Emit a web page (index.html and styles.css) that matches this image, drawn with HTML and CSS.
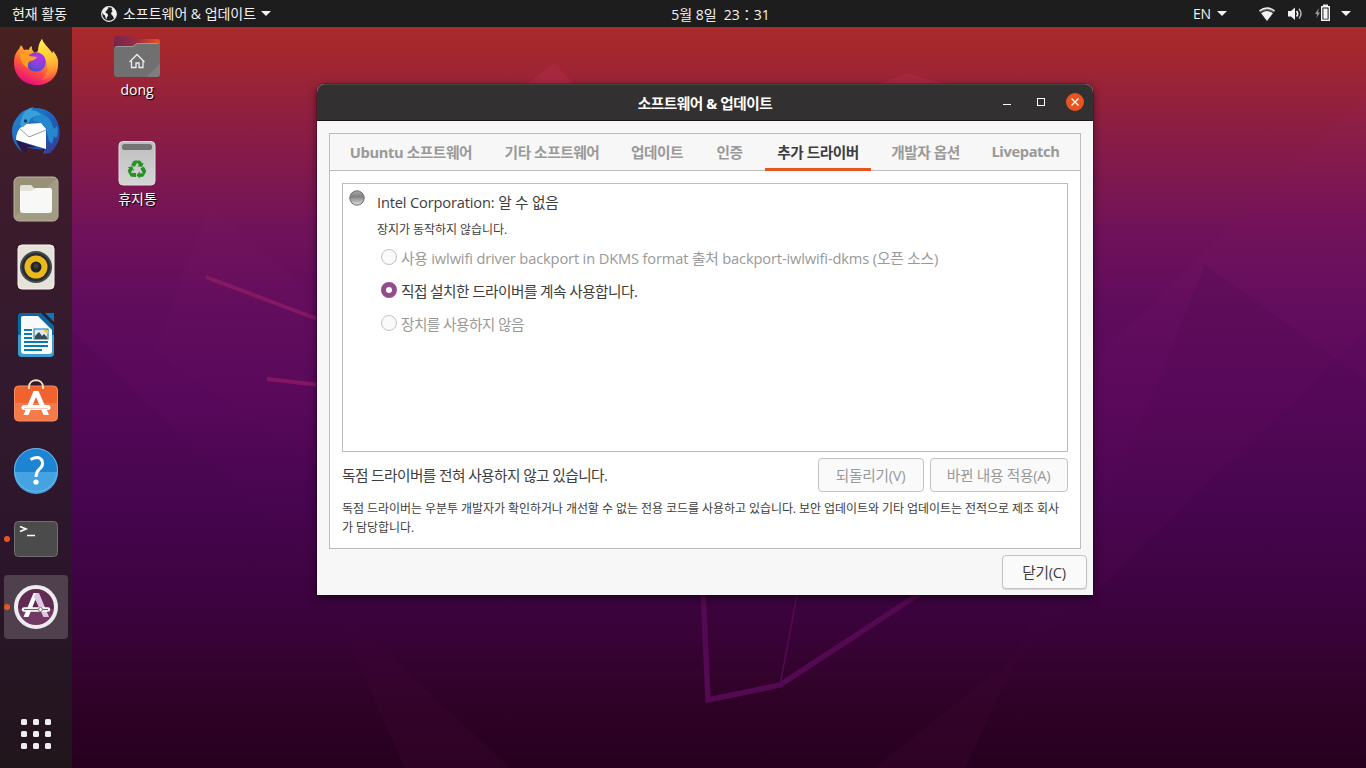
FILE: index.html
```html
<!DOCTYPE html>
<html lang="ko">
<head>
<meta charset="utf-8">
<title>소프트웨어 &amp; 업데이트</title>
<link rel="stylesheet" href="styles.css">
</head>
<body>
<svg class="wallpaper" viewBox="0 0 1366 768" aria-hidden="true">
  <defs>
    <linearGradient id="sky" x1="0" y1="0" x2="0" y2="1">
      <stop offset="0" stop-color="#b02b28"/><stop offset=".06" stop-color="#a6282d"/><stop offset=".13" stop-color="#94213c"/><stop offset=".22" stop-color="#81194d"/><stop offset=".3" stop-color="#70125a"/><stop offset=".4" stop-color="#600c5d"/><stop offset=".52" stop-color="#58085a"/><stop offset=".65" stop-color="#480550"/><stop offset=".78" stop-color="#3d0340"/><stop offset=".9" stop-color="#310229"/><stop offset="1" stop-color="#26001e"/>
    </linearGradient>
    <linearGradient id="shade" x1="0" y1="0" x2="0" y2="1"><stop offset="0" stop-color="#30003c" stop-opacity=".12"/><stop offset="1" stop-color="#30003c" stop-opacity="0"/></linearGradient>
    <linearGradient id="glow" x1="0" y1="0" x2="0" y2="1"><stop offset="0" stop-color="#83206a" stop-opacity="0"/><stop offset="1" stop-color="#83206a" stop-opacity=".08"/></linearGradient>
    <linearGradient id="fade" x1="0" y1="0" x2="0" y2="1"><stop offset="0" stop-color="#83206a" stop-opacity=".1"/><stop offset="1" stop-color="#83206a" stop-opacity="0"/></linearGradient>
  </defs>
  <rect width="1366" height="768" fill="url(#sky)"/>
  <path d="M72 330 310 560V600L72 600Z" fill="url(#shade)"/>
  <path d="M155 350 210 205 317 300V470Z" fill="url(#fade)"/>
  <path d="M330 600 405 768H510Z" fill="url(#glow)"/>
  <path d="M1366 95 1093 360V595L1366 330Z" fill="#9b2974" opacity=".06"/>
  <path d="M1205 265 1093 540V595H1366V380Z" fill="url(#shade)"/>
  <path d="M1093 595 875 768H965L1045 595Z" fill="url(#glow)"/>
  <path d="M526 85 554 63 575 85M878 85 907 73 950 85" fill="#a92a42" opacity=".75"/>
  <g fill="none" stroke="#9c2068" stroke-width="4" opacity=".6"><path d="M206 277 320 320M267 379 320 385"/></g>
  <g fill="none" stroke="#540a52"><path stroke-width="5.500" d="M703 590 708 700 780 685 925 590"/><path stroke-width="1.500" d="M780 685 798 590"/></g>
</svg>

<div class="screen">
<header class="topbar">
  <div class="topbar-left">
    <span class="activities">현재 활동</span>
    <svg class="globe" viewBox="0 0 16 16"><circle cx="8" cy="8" r="7.300" fill="#1d1d1d" stroke="#f2f2f2" stroke-width="1.200"/><path fill="#f2f2f2" d="M1.500 5 3.500 2.200 6.500 1 7.600 2.200 6.300 3 6.300 4.200 4.800 5 4.500 6.500 6.300 7.800 7.200 9.300 6 11.300 5.400 13.500 4.600 12 4 9.500 2.500 8.500 1.200 6.500ZM11 1.800 13 3 15 6 15.200 9 13.700 12 12.700 12 12 10 10.500 8.700 10.100 6.800 11.600 5.200 10.600 3.700Z"/></svg>
    <span class="app-name">소프트웨어 &amp; 업데이트</span><i class="caret"></i>
  </div>
  <div class="clock">5월 8일&nbsp; 23：31</div>
  <div class="topbar-right">
    <span class="lang">EN</span><i class="caret"></i>
    <svg class="wifi" viewBox="0 0 16 16"><path fill="#777" d="M0 5Q8-1 16 5L14.800 6.600Q8 2 1.200 6.600Z"/><path d="M.5 4.800Q8-.8 15.500 4.800" fill="none" stroke="#f2f2f2" stroke-width="1.400"/><path fill="#f2f2f2" d="M2.100 7.200Q8 2.800 13.900 7.200L8 15Z"/></svg>
    <svg class="volume" viewBox="0 0 16 16"><path fill="#f2f2f2" d="M1 5H4L8 1.500V14L4 10.500H1Z"/><path d="M9.600 5Q11.800 7.800 9.600 10.500" fill="none" stroke="#f2f2f2" stroke-width="1.600"/><path d="M12 2.800Q16 7.800 12 12.600" fill="none" stroke="#bbb" stroke-width="1.400"/></svg>
    <svg class="battery" viewBox="0 0 16 18"><path fill="#999" d="M4 4 0 10H2.200L1.500 14 5 8.500H3Z"/><path fill="none" stroke="#f2f2f2" stroke-width="1.400" d="M6.700 2.700H14.300V16.300H6.700Z"/><path fill="#f2f2f2" d="M8 .5H13V2.500H8ZM8.400 4.500H12.600V14.700H8.400Z"/></svg>
    <i class="caret"></i>
  </div>
</header>

<div class="workspace">
<nav class="dock">
  <div class="launcher"><svg viewBox="0 1 48 48">
    <defs><linearGradient id="fx" x1=".8" y1="0" x2=".35" y2="1"><stop offset="0" stop-color="#fff44f"/><stop offset=".38" stop-color="#ffa92d"/><stop offset=".65" stop-color="#ff5a3c"/><stop offset="1" stop-color="#e5097f"/></linearGradient><linearGradient id="fxr" x1=".3" y1="0" x2=".5" y2="1"><stop offset="0" stop-color="#fff04a"/><stop offset=".5" stop-color="#ffc736"/><stop offset="1" stop-color="#ff8a35" stop-opacity=".3"/></linearGradient><radialGradient id="fxg" cx=".65" cy=".25" r=".8"><stop offset="0" stop-color="#b833e8"/><stop offset=".55" stop-color="#8243dc"/><stop offset="1" stop-color="#4a4fc0"/></radialGradient></defs>
    <path fill="url(#fx)" d="M8 9C9 6 10 8 12 12Q15 11 17 12Q17 9 20 8Q19 12 23 15L27 12C26 7 29 3 30 1C31 6 38 10 40 16L41 13C44 17 47 21 46 27C46 39 37 47 25 47C12 47 2 38 2 25C2 18 4 14 7 11Z"/>
    <path fill="url(#fxr)" d="M30 1C31 7 39 11 42 18L41 13Q48 21 45 31Q40 41 30 42 38 34 34 22L26 14Q26 6 30 1Z"/>
    <circle cx="24" cy="24" r="9.800" fill="url(#fxg)"/><path fill="#ff9d22" d="M8 16Q13 14 18 18L25 19Q24 22 18 23 15 25 16 30 8 26 8 16Z"/>
  </svg></div>
  <div class="launcher"><svg viewBox="0 0 48 48">
    <defs><linearGradient id="tb" x1="0" y1="0" x2="1" y2="1"><stop offset="0" stop-color="#258bd0"/><stop offset=".5" stop-color="#1b65bd"/><stop offset="1" stop-color="#3c3591"/></linearGradient></defs>
    <path fill="url(#tb)" d="M4 12Q10 1 24 1Q43 2 47 20Q50 36 38 46L31 47 33 42Q16 44 4 34L10 45Q0 37 0 25Q0 17 4 12Z"/>
    <path fill="#2587cc" d="M21 5Q37 5 42 22L45 19Q47 27 44 31L42 29 40 37 37 34 35 26Q33 15 21 14Z"/>
    <path fill="#fff" d="M8 21 14 17 29 16 34 22 34 42 4 33Q4 26 8 21Z"/><path d="M7 21 17 30 34 23" fill="none" stroke="#999"/>
    <path fill="#39a0dc" d="M9 13Q12 1 22 0L19 3Q27 4 29 8 19 8 17 15L11 20 8 18Z"/><circle cx="13.500" cy="14" r="1.700" fill="#163b59"/><path fill="#29164e" d="M4 33 25 40.500 15 40 14 45 10 43Z"/>
  </svg></div>
  <div class="launcher"><svg viewBox="0 0 48 48"><rect x="2" y="2" width="44" height="44" rx="5" fill="#989178" stroke="#bbb5a3"/><path fill="#a29c85" d="M45 3 3 41Q3 45 7 45H40Q45 45 45 40V7Z"/><path fill="#e3e1d9" d="M8 12Q8 10 10 10H19L23 14V24H8Z"/><path fill="#f8f8f7" d="M8 16H20L23 13H38Q40 13 40 16V35Q40 38 37 38H11Q8 38 8 35Z"/></svg></div>
  <div class="launcher"><svg viewBox="0 0 48 48"><rect x="6" y="2" width="36" height="44" rx="4" fill="#e5e2d9" stroke="#f7f5ee"/><circle cx="24" cy="24" r="16" fill="#444a51"/><circle cx="24" cy="24" r="14" fill="#282c31"/><circle cx="24" cy="24" r="11.500" fill="#ebb91b"/><circle cx="24" cy="24" r="5.500" fill="#202427"/><circle cx="24" cy="23" r="2.500" fill="#3d4043"/></svg></div>
  <div class="launcher"><svg viewBox="0 0 48 48"><path fill="#0669a4" d="M9 2H29L42 15V42Q42 46 38 46H10Q6 46 6 42V5Q6 2 9 2Z"/><path fill="#3b9cd0" d="M6 24H42V42Q42 46 38 46H10Q6 46 6 42Z"/><path fill="#fafafa" d="M11 5H26L40 19V40Q40 43 37 43H12Q9 43 9 40V7Q9 5 11 5Z"/><path fill="#087bb5" d="M33 2H42V11Z"/><path d="M12 19H20M12 23H20M12 27H20M12 31H36M12 35H36M12 39H30" stroke="#087bb5" stroke-width="2"/><rect x="22" y="18" width="14" height="10" fill="#dceaf3" stroke="#087bb5"/><path fill="#394b56" d="M23 28V25L27 21 30 25 32 23 35 26V28Z"/><path fill="#f5c436" d="M31 19H36V23Z"/></svg></div>
  <div class="launcher"><svg viewBox="0 0 48 48"><defs><linearGradient id="sw" x1="0" y1="0" x2="0" y2="1"><stop offset=".5" stop-color="#f0632e"/><stop offset=".5" stop-color="#f47a49"/></linearGradient></defs><rect x="2.500" y="7" width="43" height="35" rx="4" fill="url(#sw)" stroke="#fa8b60"/><path d="M17 10V8C17-1 31-1 31 8V10" fill="none" stroke="#f4dfba" stroke-width="2"/><path d="M21.500 12H26.500L37 36H31.500L24 18 16.500 36H11.500Z" fill="#fff"/><path d="M12 28.500H36" stroke="#fff" stroke-width="5" stroke-linecap="round"/><path d="M12 29.500H36" stroke="#f9cbb9"/></svg></div>
  <div class="launcher"><svg viewBox="0 1 48 48"><circle cx="24" cy="24" r="22" fill="#1d83d3"/><path d="M2 26A22 22 0 0 0 46 26Z" fill="#46a3e1"/><circle cx="24" cy="24" r="21.500" fill="none" stroke="#72b5e2"/><path d="M18.500 13.500Q27 9 30 14.500 32 19.500 27 23.500 24 26 24 31" fill="none" stroke="#fff" stroke-width="3"/><circle cx="24" cy="36" r="2.600" fill="#fff"/></svg></div>
  <div class="launcher running"><svg viewBox="0 0 48 48"><rect x="2.500" y="6.500" width="43" height="35" rx="4" fill="#4b4b4b" stroke="#717171"/><path d="M8 11.500 14 14 8 16.500M15 20.500H23" fill="none" stroke="#fff" stroke-width="1.700"/></svg></div>
  <div class="launcher running focused"><svg viewBox="0 0 48 48"><circle cx="24" cy="24" r="20" fill="#602a52"/><path d="M4 26H44Q42 44 24 44T4 26" fill="#723962"/><circle cx="24" cy="24" r="20" fill="none" stroke="#ececec" stroke-width="4"/><path d="M21.500 10H26L16.500 34H11.500Z" fill="#fff"/><path d="M24 10H27L37 34H31.500L22 14Z" fill="#dec5e3"/><path d="M12 26.500H36" stroke="#fff" stroke-width="4.500" stroke-linecap="round"/><path d="M12 26.500H36" stroke="#666" stroke-width="1.200"/><circle cx="28.500" cy="26.500" r="2" fill="#fff" stroke="#777"/></svg></div>
  <div class="app-grid"><i></i><i></i><i></i><i></i><i></i><i></i><i></i><i></i><i></i></div>
</nav>

<div class="desktop-icons">
  <div class="desktop-item"><svg viewBox="0 0 48 48"><defs><linearGradient id="fol"><stop stop-color="#77244e"/><stop offset=".5" stop-color="#9b2d3f"/><stop offset="1" stop-color="#e95420"/></linearGradient></defs><path fill="url(#fol)" d="M1 6Q1 3 4 3H19L23 6H44Q47 6 47 9V30H1Z"/><path fill="#707070" d="M1 17Q1 13 5 13H20L24 10H44Q47 10 47 13V41Q47 44 44 44H4Q1 44 1 41Z"/><path fill="#7e7e7e" d="M47 30 34 44H44Q47 44 47 41Z"/><path d="M2 14.500Q3 13.500 5 13.500H20L24 10.500H45" fill="none" stroke="#999"/><path d="M16.500 29 24 21.500 31.500 29M18.500 28V34.500H23V30H26V34.500H30V27" fill="none" stroke="#eee" stroke-width="1.300"/></svg><span>dong</span></div>
  <div class="desktop-item trash"><svg viewBox="0 0 48 48"><defs><linearGradient id="bin" x2="0" y2="1"><stop stop-color="#bebebe"/><stop offset="1" stop-color="#d5d5d5"/></linearGradient></defs><rect x="6" y="1.500" width="36" height="43.500" rx="4" fill="url(#bin)" stroke="#dedede"/><rect x="9" y="4" width="30" height="6" rx="2.500" fill="#747474"/><g transform="translate(24 29.500)" fill="#249321"><g id="recycle"><path d="M-6-4.500-3.500-8.500Q-3-9-2-9H2.500Q3.500-9 4-8L5-6 6.700-7 5.200-2.500 .2-3.200 1.900-4.200 .3-7-2.500-2.500Z"/></g><use href="#recycle" transform="rotate(120)"/><use href="#recycle" transform="rotate(240)"/></g></svg><span>휴지통</span></div>
</div>

<main class="window">
  <div class="titlebar">
    <h1>소프트웨어 &amp; 업데이트</h1>
    <div class="controls"><svg viewBox="0 0 16 16"><path d="M4 10.500H12" stroke="#fff"/></svg><svg viewBox="0 0 16 16"><rect x="4.500" y="4.500" width="7" height="7" fill="none" stroke="#fff"/></svg><svg class="close" viewBox="0 0 18 18"><circle cx="9" cy="9" r="9" fill="#e95420"/><path d="M5.500 5.500 12.500 12.500M12.500 5.500 5.500 12.500" stroke="#fff" stroke-width="1.300"/></svg></div>
  </div>
  <div class="window-body">
    <section class="notebook">
      <div class="tabs"><span class="tab tab-ubuntu">Ubuntu 소프트웨어</span><span class="tab tab-other">기타 소프트웨어</span><span class="tab tab-update">업데이트</span><span class="tab tab-auth">인증</span><span class="tab tab-driver active">추가 드라이버</span><span class="tab tab-dev">개발자 옵션</span><span class="tab tab-live">Livepatch</span></div>
      <div class="page">
        <div class="device-list">
          <svg class="led" viewBox="0 0 16 16"><defs><linearGradient id="led" x2="0" y2="1"><stop stop-color="#aaa"/><stop offset=".4" stop-color="#808080"/><stop offset="1" stop-color="#e0e0e0"/></linearGradient></defs><circle cx="8" cy="8" r="7.200" fill="url(#led)" stroke="#6c6c6c"/></svg>
          <div class="device">
            <div class="device-name">Intel Corporation: 알 수 없음</div>
            <div class="device-status">장지가 동작하지 않습니다.</div>
            <label class="option disabled"><i class="radio"></i><span class="long">사용 iwlwifi driver backport in DKMS format 출처 backport-iwlwifi-dkms (오픈 소스)</span></label>
            <label class="option"><i class="radio checked"></i><span>직접 설치한 드라이버를 계속 사용합니다.</span></label>
            <label class="option disabled"><i class="radio"></i><span>장치를 사용하지 않음</span></label>
          </div>
        </div>
        <div class="actions"><span class="summary">독점 드라이버를 전혀 사용하지 않고 있습니다.</span><button class="revert" disabled>되돌리기(V)</button><button class="apply" disabled>바뀐 내용 적용(A)</button></div>
        <p class="notice">독점 드라이버는 우분투 개발자가 확인하거나 개선할 수 없는 전용 코드를 사용하고 있습니다. 보안 업데이트와 기타 업데이트는 전적으로 제조 회사<br>가 담당합니다.</p>
      </div>
    </section>
    <footer><button class="close-button">닫기(C)</button></footer>
  </div>
</main>
</div>
</div>
</body>
</html>
```

FILE: styles.css
```css
* { box-sizing: border-box; }
body { margin: 0; width: 1366px; height: 768px; overflow: hidden; font: 14.67px/20px "Open Sans", "Noto Sans CJK KR", sans-serif; color: #3d3d3d; background: #3d0340; }
svg { display: block; }
.wallpaper { position: absolute; inset: 0; width: 1366px; height: 768px; }
.screen { position: relative; height: 768px; display: flex; flex-direction: column; }
.topbar { height: 27px; background: #1d1d1d; color: #f2f2f2; display: grid; grid-template-columns: minmax(0, 1fr) auto minmax(0, 1fr); align-items: center; white-space: nowrap; font-size: 14px; }
.topbar-left, .topbar-right { display: flex; align-items: center; }
.topbar-left { padding-left: 12px; letter-spacing: -.03px; }
.activities { width: 89px; }
.globe { width: 16px; height: 16px; margin-right: 6px; }
.app-name { width: 138px; }
.caret { width: 0; height: 0; border: 5px solid transparent; border-top-color: #f2f2f2; border-bottom: 0; }
.clock { padding: 2px 0 0 75px; }
.topbar-right { justify-content: flex-end; padding-right: 15px; }
.lang { margin-right: 6px; letter-spacing: -.1px; }
.wifi { width: 16px; height: 16px; margin-left: 32px; }
.volume { width: 16px; height: 16px; margin-left: 12px; }
.battery { width: 16px; height: 18px; margin: 0 10px 2px 12px; }
.workspace { flex: 1; display: flex; min-height: 0; }
.dock { width: 72px; padding: 4px 4px 19px; background: linear-gradient(#482120 0, #3d1c2b 20%, #32192e 48%, #2b152a 75%, #21151c); display: flex; flex-direction: column; gap: 4px; }
.launcher { position: relative; height: 64px; display: grid; place-items: center; border-radius: 4px; flex: none; }
.launcher svg { width: 48px; height: 48px; }
.running::before { content: ""; position: absolute; left: 0; top: 29px; width: 6px; height: 6px; border-radius: 50%; background: #e95420; }
.focused { background: #50404e; }
.app-grid { margin: auto auto 0; display: grid; grid-template-columns: repeat(3, 6px); gap: 6px; }
.app-grid i { height: 6px; border-radius: 1.5px; background: #eee; }
.desktop-icons { width: 245px; padding: 6px 0 0 20px; color: white; }
.desktop-item { width: 90px; text-align: center; font-size: 14px; text-shadow: 1px 1px 1px #000; }
.desktop-item svg { width: 48px; height: 48px; margin: 0 auto; }
.desktop-item span { display: block; line-height: 18px; }
.trash { margin-top: 41px; }
.trash span { margin: 2px 0 0 1px; }
.window { width: 776px; height: 511px; margin-top: 57px; border-radius: 8px 8px 0 0; box-shadow: 0 3px 10px #0008, 0 0 0 1px #0003; background: #f7f7f7; }
.titlebar { height: 37px; border-radius: 8px 8px 0 0; background: #323030; border-top: 1px solid #474444; border-bottom: 1px solid #181818; color: white; display: grid; grid-template-columns: 1fr auto 1fr; align-items: center; }
h1 { grid-column: 2; margin: 1px 0 0; font-size: 14.67px; line-height: 20px; font-weight: 700; letter-spacing: -.45px; white-space: nowrap; }
.controls { display: flex; justify-content: flex-end; align-items: center; padding: 0 9px 1px 0; gap: 18px; }
.controls svg { width: 16px; height: 16px; }
.controls .close { width: 18px; height: 18px; margin-left: -1px; }
.window-body { padding: 12px; }
.notebook { width: 752px; height: 416px; border: 1px solid #bfbbb9; background: #fff; }
.tabs { height: 37px; display: flex; background: #f7f7f7; border-bottom: 1px solid #bfbbb9; padding-left: 8px; }
.tab { height: 37px; text-align: center; padding-top: 8px; color: #999; font-weight: 700; letter-spacing: -.43px; white-space: nowrap; flex: none; }
.tab-ubuntu { width: 146px; letter-spacing: -.37px; }
.tab-other { width: 136px; }
.tab-update { width: 74px; }
.tab-auth { width: 71px; }
.tab-driver { width: 106px; }
.tab-dev { width: 109px; }
.tab-live { width: 91px; letter-spacing: -.37px; padding-top: 7px; }
.tab.active { color: #3d3d3d; border-bottom: 3px solid #e95420; }
.page { padding: 12px; }
.device-list { width: 726px; height: 269px; border: 1px solid #bfbbb9; display: flex; padding: 6px; }
.led { width: 16px; height: 16px; }
.device { padding-left: 12px; white-space: nowrap; }
.device-name { margin-top: 2px; letter-spacing: -.17px; }
.device-status { font-size: 12px; margin-top: 8px; letter-spacing: -.05px; }
.option { height: 33px; display: flex; align-items: center; gap: 4px; padding-left: 4px; letter-spacing: -.55px; }
.option span { padding-top: 2px; }
.option .long { letter-spacing: -.15px; }
.radio { width: 16px; height: 16px; border: 1px solid #c5c2c0; border-radius: 50%; background: #fafafa; }
.checked { border: 5px solid #924d8b; background: #fff; }
.disabled { color: #999; }
.actions { display: flex; align-items: center; gap: 6px; height: 34px; margin-top: 6px; }
.summary { flex: 1; letter-spacing: -.55px; }
button { height: 34px; border: 1px solid #c5c2c0; border-radius: 4px; background: #fafafa; padding: 0 1px 1px 0; font: inherit; letter-spacing: -.25px; color: #3d3d3d; }
button:disabled { color: #999; }
.revert { width: 106px; }
.apply { width: 138px; }
.notice { margin: 7px 0 0; font-size: 12px; line-height: 19px; letter-spacing: -.06px; white-space: nowrap; }
footer { display: flex; justify-content: flex-end; margin: 6px -6px 0 0; }
.close-button { width: 85px; box-shadow: 0 1px 1px #0002; }
```
